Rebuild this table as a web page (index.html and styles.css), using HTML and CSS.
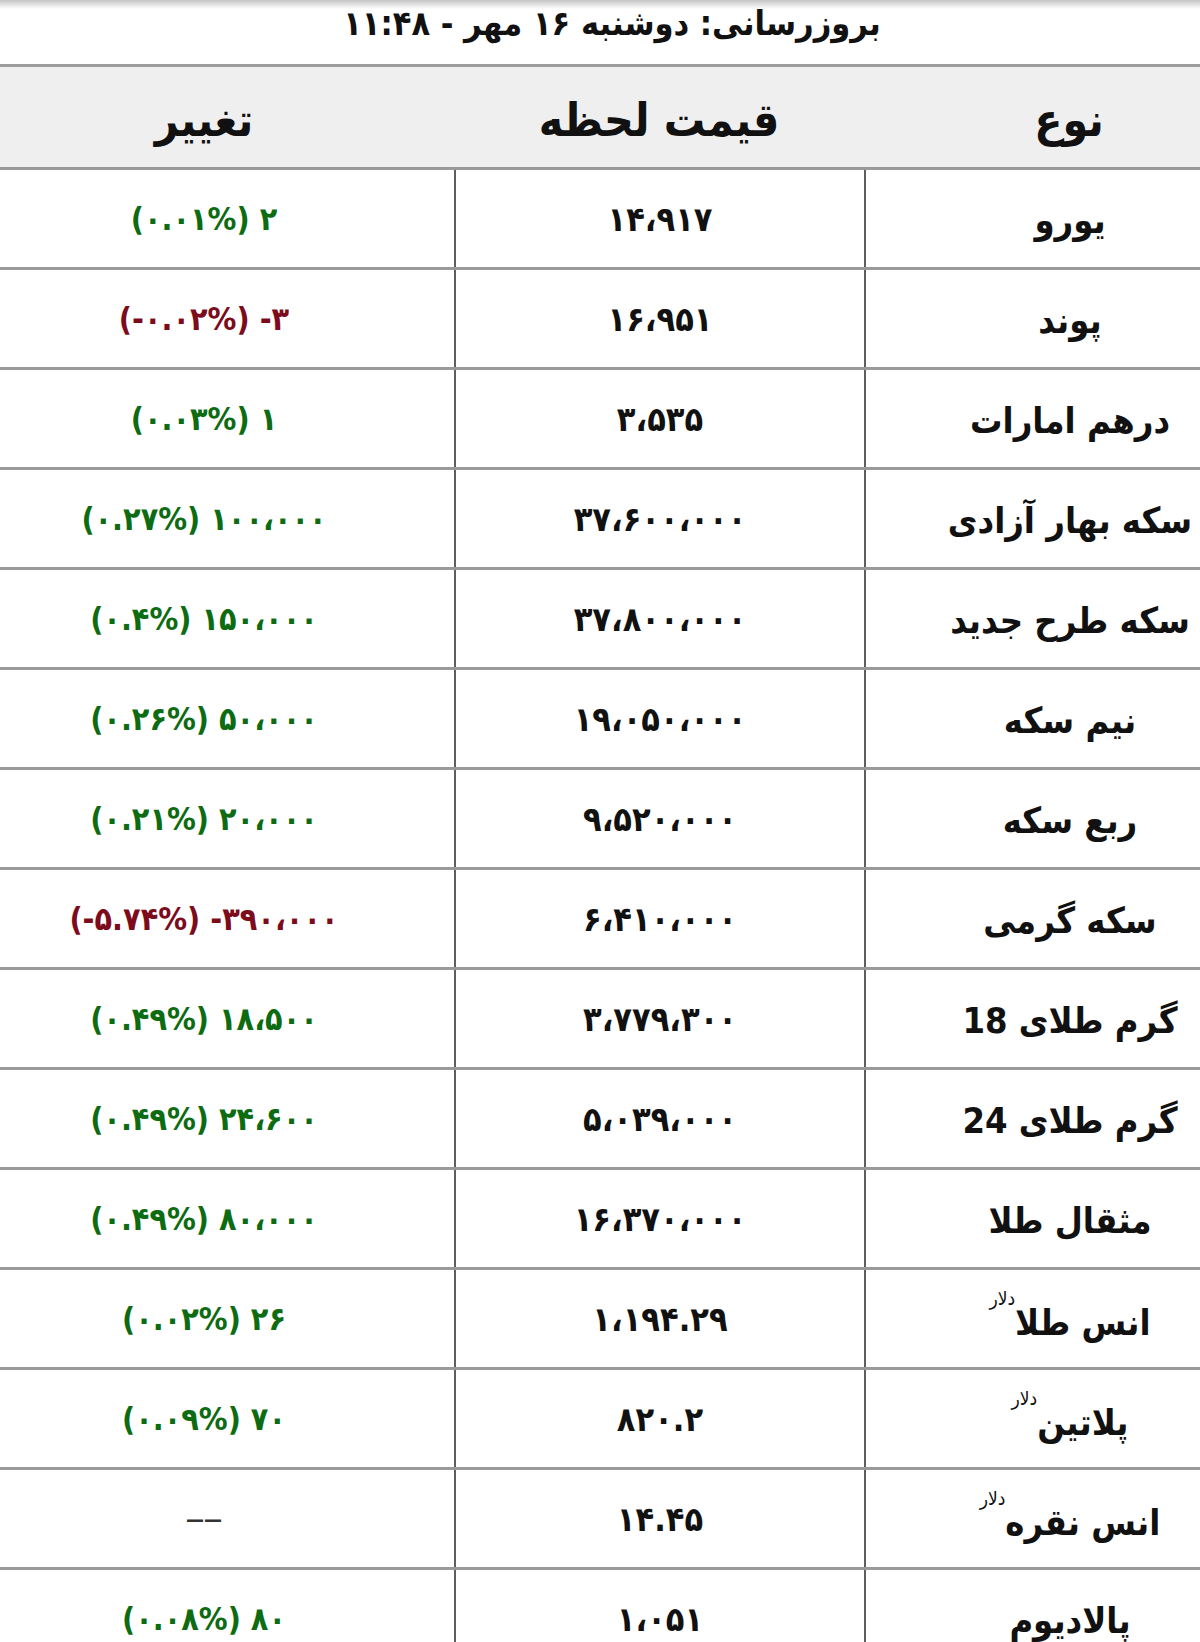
FILE: index.html
```html
<!DOCTYPE html>
<html lang="fa">
<head>
<meta charset="utf-8">
<title>قیمت لحظه</title>
<link rel="stylesheet" href="styles.css">
</head>
<body>
<div class="page">
  <div class="title">بروزرسانی: دوشنبه ۱۶ مهر - ۱۱:۴۸</div>
  <div class="table">
    <div class="head">
      <div class="hcell">نوع</div>
      <div class="hcell">قیمت لحظه</div>
      <div class="hcell">تغییر</div>
    </div>
    <div class="row"><div class="cell name">یورو</div><div class="cell price">۱۴،۹۱۷</div><div class="cell chg up">(۰.۰۱%) ۲</div></div>
    <div class="row"><div class="cell name">پوند</div><div class="cell price">۱۶،۹۵۱</div><div class="cell chg down">(-۰.۰۲%) -۳</div></div>
    <div class="row"><div class="cell name">درهم امارات</div><div class="cell price">۳،۵۳۵</div><div class="cell chg up">(۰.۰۳%) ۱</div></div>
    <div class="row"><div class="cell name">سکه بهار آزادی</div><div class="cell price">۳۷،۶۰۰،۰۰۰</div><div class="cell chg up">(۰.۲۷%) ۱۰۰،۰۰۰</div></div>
    <div class="row"><div class="cell name">سکه طرح جدید</div><div class="cell price">۳۷،۸۰۰،۰۰۰</div><div class="cell chg up">(۰.۴%) ۱۵۰،۰۰۰</div></div>
    <div class="row"><div class="cell name">نیم سکه</div><div class="cell price">۱۹،۰۵۰،۰۰۰</div><div class="cell chg up">(۰.۲۶%) ۵۰،۰۰۰</div></div>
    <div class="row"><div class="cell name">ربع سکه</div><div class="cell price">۹،۵۲۰،۰۰۰</div><div class="cell chg up">(۰.۲۱%) ۲۰،۰۰۰</div></div>
    <div class="row"><div class="cell name">سکه گرمی</div><div class="cell price">۶،۴۱۰،۰۰۰</div><div class="cell chg down">(-۵.۷۴%) -۳۹۰،۰۰۰</div></div>
    <div class="row"><div class="cell name">گرم طلای 18</div><div class="cell price">۳،۷۷۹،۳۰۰</div><div class="cell chg up">(۰.۴۹%) ۱۸،۵۰۰</div></div>
    <div class="row"><div class="cell name">گرم طلای 24</div><div class="cell price">۵،۰۳۹،۰۰۰</div><div class="cell chg up">(۰.۴۹%) ۲۴،۶۰۰</div></div>
    <div class="row"><div class="cell name">مثقال طلا</div><div class="cell price">۱۶،۳۷۰،۰۰۰</div><div class="cell chg up">(۰.۴۹%) ۸۰،۰۰۰</div></div>
    <div class="row"><div class="cell name"><span>انس طلا&#8204;<sup class="unit">&#8204;دلار</sup></span></div><div class="cell price">۱،۱۹۴.۲۹</div><div class="cell chg up">(۰.۰۲%) ۲۶</div></div>
    <div class="row"><div class="cell name"><span>پلاتین&#8204;<sup class="unit">&#8204;دلار</sup></span></div><div class="cell price">۸۲۰.۲</div><div class="cell chg up">(۰.۰۹%) ۷۰</div></div>
    <div class="row"><div class="cell name"><span>انس نقره&#8204;<sup class="unit">&#8204;دلار</sup></span></div><div class="cell price">۱۴.۴۵</div><div class="cell chg none">——</div></div>
    <div class="row"><div class="cell name">پالادیوم</div><div class="cell price">۱،۰۵۱</div><div class="cell chg up">(۰.۰۸%) ۸۰</div></div>
  </div>
</div>
</body>
</html>
```
FILE: styles.css
```css
html, body {
  margin: 0;
  padding: 0;
  background: #ffffff;
}
body {
  overflow: hidden;
  font-family: "DejaVu Sans Condensed", "DejaVu Sans", sans-serif;
  color: #111111;
}
.page {
  width: 1200px;
  height: 1642px;
  overflow: hidden;
  background: linear-gradient(to bottom, #c4c4c4 0px, #ffffff 9px);
}
.title {
  direction: rtl;
  text-align: center;
  font-size: 34px;
  font-weight: bold;
  line-height: 46px;
  height: 64px;
  padding-left: 24px;
  box-sizing: border-box;
}
.table {
  width: 1320px;
  margin-left: -46px;
}
.head {
  display: grid;
  grid-template-columns: 410px 410px 500px;
  direction: rtl;
  height: 100px;
  background: #efefef;
  border-top: 3px solid #9d9d9d;
  border-bottom: 3px solid #9a9a9a;
}
.hcell {
  display: flex;
  align-items: center;
  justify-content: center;
  font-size: 46px;
  font-weight: bold;
  padding-top: 6px;
}
.row {
  display: grid;
  grid-template-columns: 410px 410px 500px;
  direction: rtl;
  height: 97px;
  border-bottom: 3px solid #9a9a9a;
}
.cell {
  display: flex;
  align-items: center;
  justify-content: center;
}
.name {
  border-left: 2px solid #5e5e5e;
  font-size: 36px;
  font-weight: bold;
  padding-top: 4px;
}
.price {
  border-left: 2px solid #5e5e5e;
  direction: ltr;
  font-size: 34px;
  font-weight: bold;
  letter-spacing: -1px;
}
.chg {
  direction: ltr;
  font-size: 32px;
  font-weight: bold;
}
.up { color: #0d6b12; }
.down { color: #7c0c1c; }
.none { color: #333333; font-size: 20px; }
.unit {
  font-size: 19px;
  font-weight: normal;
  vertical-align: 30px;
  line-height: 0;
  margin-right: 0;
}
```
